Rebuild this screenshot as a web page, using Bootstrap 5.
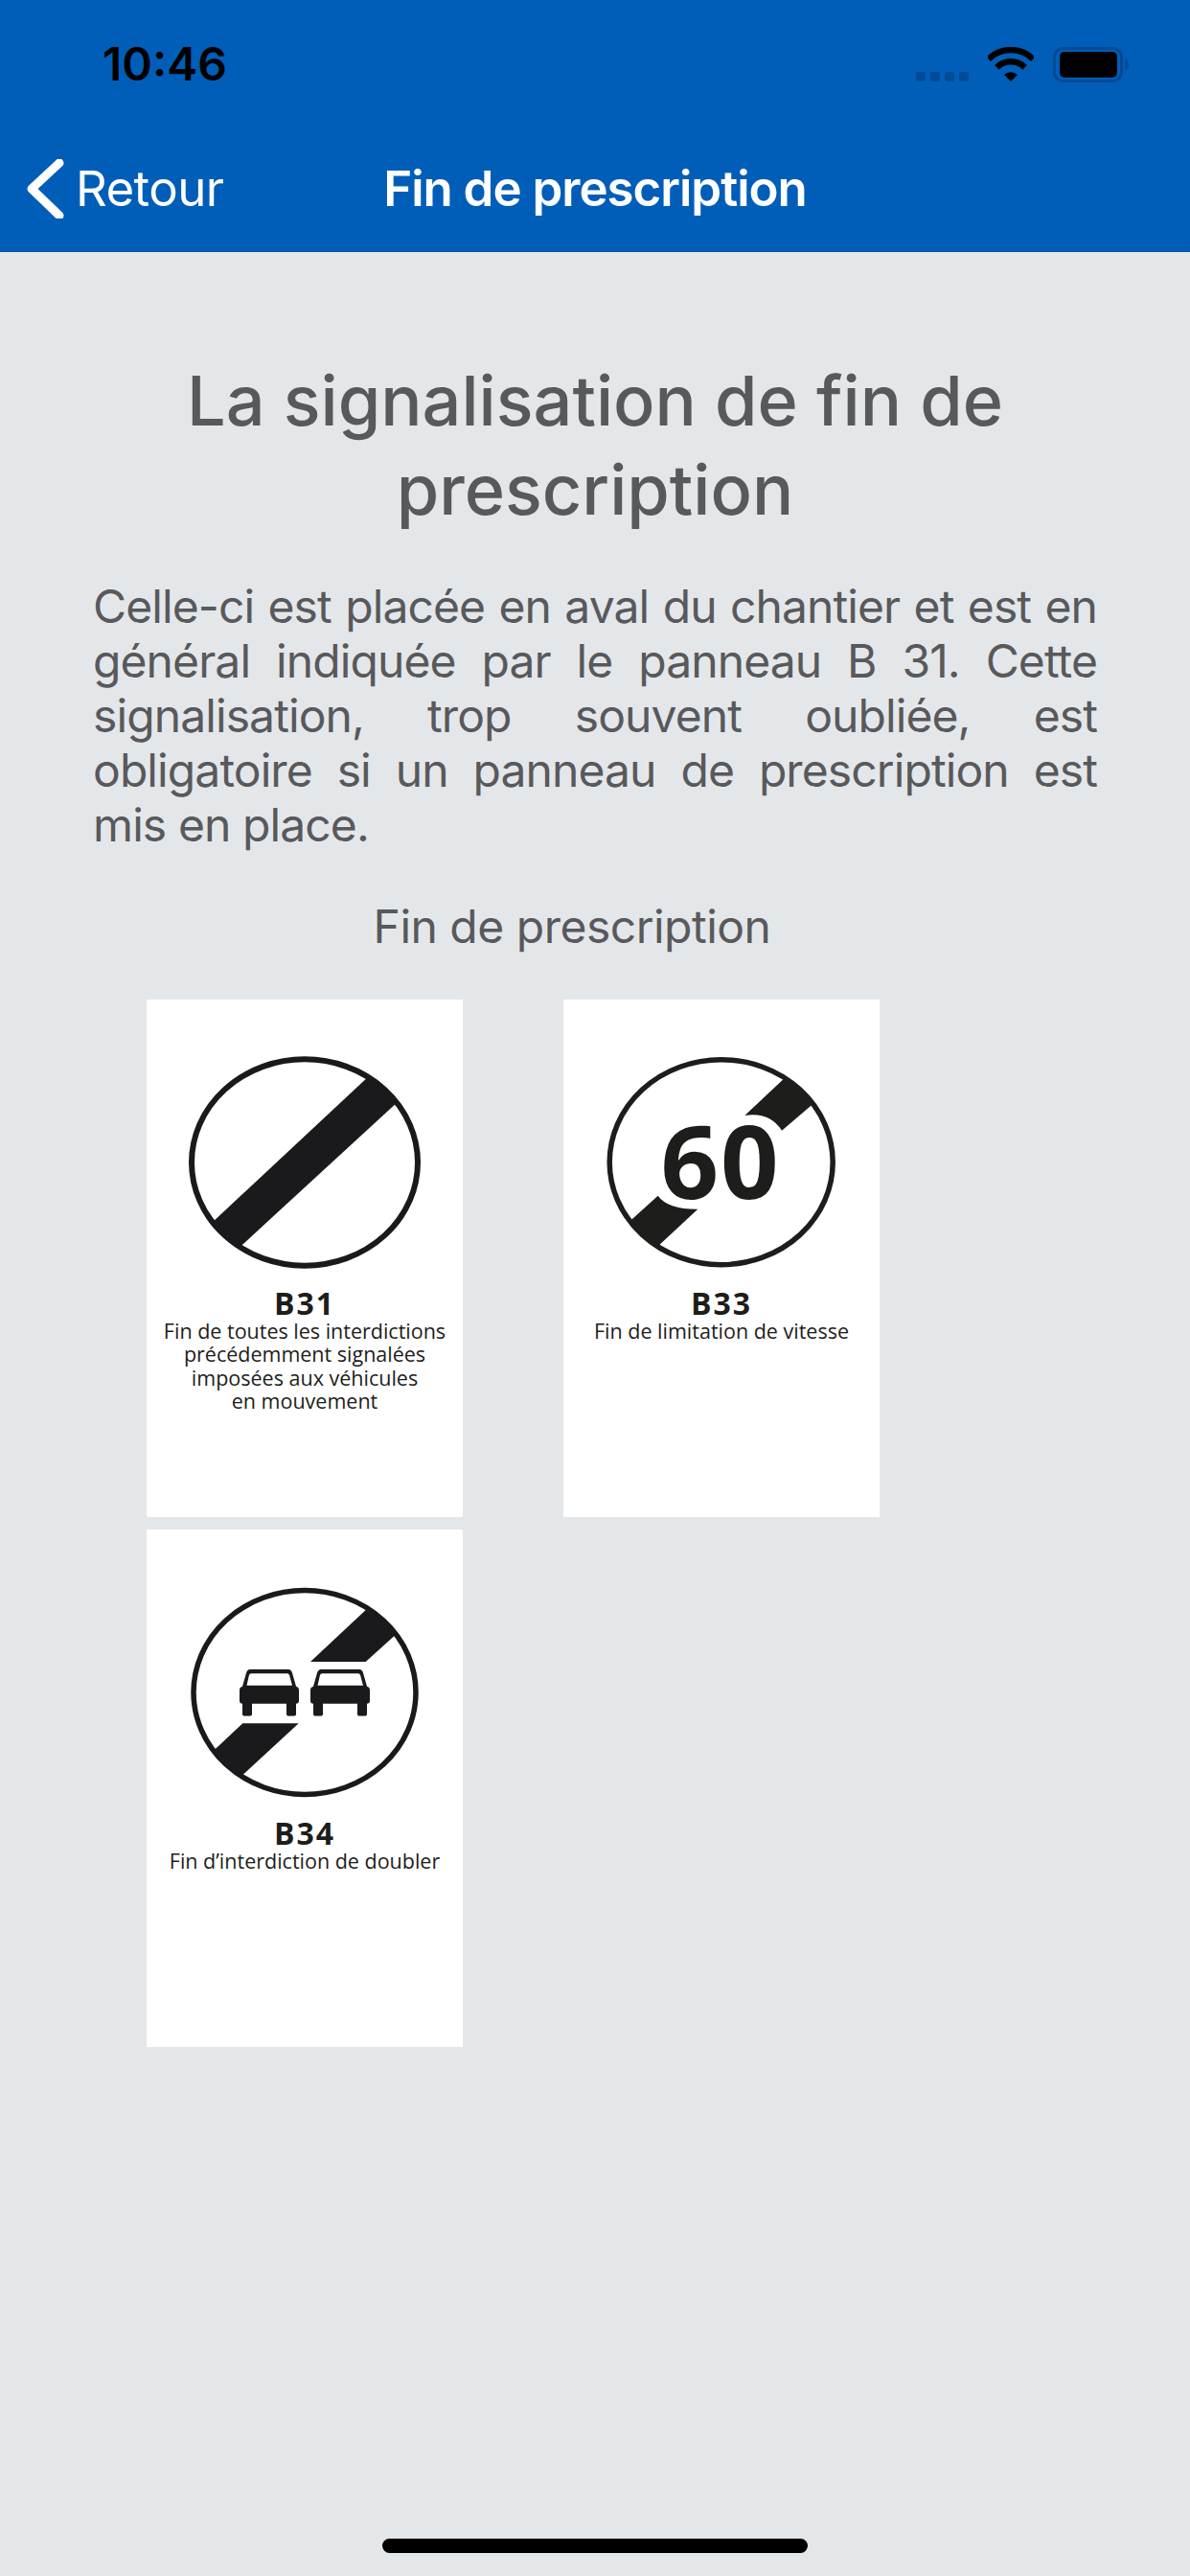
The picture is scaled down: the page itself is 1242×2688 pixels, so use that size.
<!DOCTYPE html>
<html lang="fr">
<head>
    <meta charset="UTF-8">
    <meta name="viewport" content="width=device-width, initial-scale=1.0">
    <title>Fin de prescription</title>
    <link href="https://cdn.jsdelivr.net/npm/bootstrap@5.3.0/dist/css/bootstrap.min.css" rel="stylesheet">
    <style>
        body {
            background-color: #e4e7ea;
            font-family: Inter, "Liberation Sans", sans-serif;
            color: #58595b;
        }
        .app-header {
            background-color: #015eb8;
            border-bottom: 1px solid #0b4f96;
            height: 263px;
        }
        .status-row {
            padding: 42px 64px 0 107px;
            height: 92px;
        }
        .status-time {
            font-size: 48px;
            line-height: 50px;
            font-weight: 600;
            color: #000;
        }
        .signal-dots {
            padding-top: 33px;
        }
        .signal-dot {
            width: 10px;
            height: 10px;
            border-radius: 3px;
            background-color: #014a94;
            margin-right: 5px;
        }
        .wifi-icon {
            margin: 7px 0 0 15px;
        }
        .battery-icon {
            margin: 7px 0 0 20px;
        }
        .nav-row {
            margin-top: 75px;
            height: 60px;
            font-size: 51px;
            line-height: 60px;
            color: #fff;
        }
        .nav-side {
            flex: 1 1 0;
            padding: 0 24px;
        }
        .nav-back svg {
            margin-right: 11px;
            flex-shrink: 0;
        }
        .nav-back span {
            letter-spacing: -0.6px;
        }
        .nav-title {
            font-weight: 600;
            letter-spacing: -1px;
        }
        .page-title {
            font-size: 72px;
            line-height: 93px;
            font-weight: 500;
            margin: 108px 97px 0;
            color: #58595b;
        }
        .page-text {
            font-size: 48px;
            line-height: 57px;
            letter-spacing: -0.9px;
            margin: 47px 97px 0;
            text-align: justify;
        }
        .signs-block {
            width: 1000px;
            margin: 49px 0 0 97px;
        }
        .signs-caption {
            font-size: 48px;
            line-height: 57px;
            letter-spacing: -0.5px;
        }
        .signs-grid {
            margin-top: 48px;
            padding: 0 56px;
            column-gap: 105px;
            row-gap: 13px;
        }
        .sign-panel {
            width: 330px;
            height: 540px;
            background-color: #fff;
            color: #1d1d1b;
            font-family: "Open Sans", "Noto Sans", sans-serif;
        }
        .sign-panel svg {
            display: block;
        }
        .sign-code {
            font-size: 32px;
            line-height: 33px;
            font-weight: 700;
            letter-spacing: 2px;
        }
        .sign-desc {
            font-size: 21.5px;
            line-height: 24.4px;
            margin-top: 1px;
        }
        .sign-number {
            font-family: "Open Sans", sans-serif;
            font-size: 106px;
            font-weight: 700;
            letter-spacing: 2px;
            fill: #1d1d1b;
        }
        .home-bar {
            width: 444px;
            height: 15px;
            border-radius: 8px;
            background-color: #000;
            margin-bottom: 24px;
        }
    </style>
</head>
<body class="d-flex flex-column min-vh-100">
    <svg width="0" height="0" class="position-absolute">
        <symbol id="car" viewBox="0 0 62 49">
            <path fill="#1a1a1d" fill-rule="evenodd" d="M3 18 L7 4 Q8 0 12 0 H50 Q54 0 55 4 L59 18 L61 19 Q62 20 62 22 V33 Q62 36 59 36 V47 Q59 49 57 49 H51 Q49 49 49 47 V36 H13 V47 Q13 49 11 49 H5 Q3 49 3 47 V36 Q0 36 0 33 V22 Q0 20 1 19 Z M7.5 17 H55 L52 6 Q51.5 4.5 50 4.5 H12 Q10.5 4.5 10 6 Z"/>
        </symbol>
        <clipPath id="clip-b31"><ellipse cx="165" cy="170" rx="119" ry="109"/></clipPath>
        <clipPath id="clip-b33"><ellipse cx="164.7" cy="169.7" rx="118" ry="108.5"/></clipPath>
        <clipPath id="clip-b34"><ellipse cx="165" cy="170" rx="117.5" ry="108"/></clipPath>
    </svg>

    <header class="app-header">
        <div class="status-row d-flex justify-content-between">
            <div class="status-time">10:46</div>
            <div class="d-flex align-items-start">
                <div class="signal-dots d-flex">
                    <span class="signal-dot"></span>
                    <span class="signal-dot"></span>
                    <span class="signal-dot"></span>
                    <span class="signal-dot"></span>
                </div>
                <svg class="wifi-icon" width="48" height="36" viewBox="-24 -36 48 36">
                    <path d="M-23.3 -23.3 A33 33 0 0 1 23.3 -23.3" fill="none" stroke="#000" stroke-width="6.5"/>
                    <path d="M-14.6 -14.6 A20.7 20.7 0 0 1 14.6 -14.6" fill="none" stroke="#000" stroke-width="6.5"/>
                    <path d="M0 0 L-7 -7 A10 10 0 0 1 7 -7 Z" fill="#000"/>
                </svg>
                <svg class="battery-icon" width="79" height="38" viewBox="0 0 79 38">
                    <rect x="1.5" y="1.5" width="70" height="34" rx="9" fill="none" stroke="#014a94" stroke-width="3"/>
                    <rect x="7" y="5" width="60" height="27" rx="5" fill="#000"/>
                    <path d="M75 12 Q79 14 79 18.5 Q79 23 75 25 Z" fill="#014a94"/>
                </svg>
            </div>
        </div>
        <div class="nav-row d-flex align-items-center">
            <div class="nav-side nav-back d-flex align-items-center">
                <svg width="44" height="62" viewBox="0 0 44 62">
                    <path d="M38 4 L9 31 L38 59" fill="none" stroke="#fff" stroke-width="9" stroke-linecap="round" stroke-linejoin="round"/>
                </svg>
                <span>Retour</span>
            </div>
            <div class="nav-title">Fin de prescription</div>
            <div class="nav-side"></div>
        </div>
    </header>

    <main class="flex-grow-1">
        <h1 class="page-title text-center">La signalisation de fin de prescription</h1>
        <p class="page-text">Celle-ci est placée en aval du chantier et est en général indiquée par le panneau B 31. Cette signalisation, trop souvent oubliée, est obligatoire si un panneau de prescription est mis en place.</p>

        <section class="signs-block">
            <div class="signs-caption text-center">Fin de prescription</div>
            <div class="signs-grid d-flex flex-wrap">
                <div class="sign-panel text-center">
                    <svg width="330" height="300" viewBox="0 0 330 300">
                        <ellipse cx="165" cy="170" rx="118" ry="107.7" fill="none" stroke="#1a1a1d" stroke-width="6"/>
                        <path d="M233 79 L263 106 L96 259.5 L67.5 233.5 Z" fill="#1a1a1d" clip-path="url(#clip-b31)"/>
                    </svg>
                    <div class="sign-code">B31</div>
                    <div class="sign-desc">Fin de toutes les interdictions<br>précédemment signalées<br>imposées aux véhicules<br>en mouvement</div>
                </div>
                <div class="sign-panel text-center">
                    <svg width="330" height="300" viewBox="0 0 330 300">
                        <ellipse cx="164.7" cy="169.7" rx="116.5" ry="107" fill="none" stroke="#1d1d1b" stroke-width="5.5"/>
                        <path d="M234 79 L264 106 L228 136.7 Q215 117 189.3 121 Z" fill="#1d1d1b" clip-path="url(#clip-b33)"/>
                        <path d="M67.5 233 L98.7 204.7 Q109 219 140.3 218.7 L97 259 Z" fill="#1d1d1b" clip-path="url(#clip-b33)"/>
                        <text class="sign-number" x="164" y="207.5" text-anchor="middle">60</text>
                    </svg>
                    <div class="sign-code">B33</div>
                    <div class="sign-desc">Fin de limitation de vitesse</div>
                </div>
                <div class="sign-panel text-center">
                    <svg width="330" height="300" viewBox="0 0 330 300">
                        <ellipse cx="165" cy="170" rx="116" ry="106.5" fill="none" stroke="#1a1a1d" stroke-width="5.5"/>
                        <path d="M233 80 L263 107 L228.7 138 H171 Z" fill="#1a1a1d" clip-path="url(#clip-b34)"/>
                        <path d="M100.3 202.3 H158.7 L96 260 L67.5 233 Z" fill="#1a1a1d" clip-path="url(#clip-b34)"/>
                        <use href="#car" x="97" y="145.7" width="62" height="49"/>
                        <use href="#car" x="171" y="145.7" width="62" height="49"/>
                    </svg>
                    <div class="sign-code">B34</div>
                    <div class="sign-desc">Fin d’interdiction de doubler</div>
                </div>
            </div>
        </section>
    </main>

    <div class="home-bar mx-auto"></div>

    <script src="https://cdn.jsdelivr.net/npm/bootstrap@5.3.0/dist/js/bootstrap.bundle.min.js"></script>
</body>
</html>
